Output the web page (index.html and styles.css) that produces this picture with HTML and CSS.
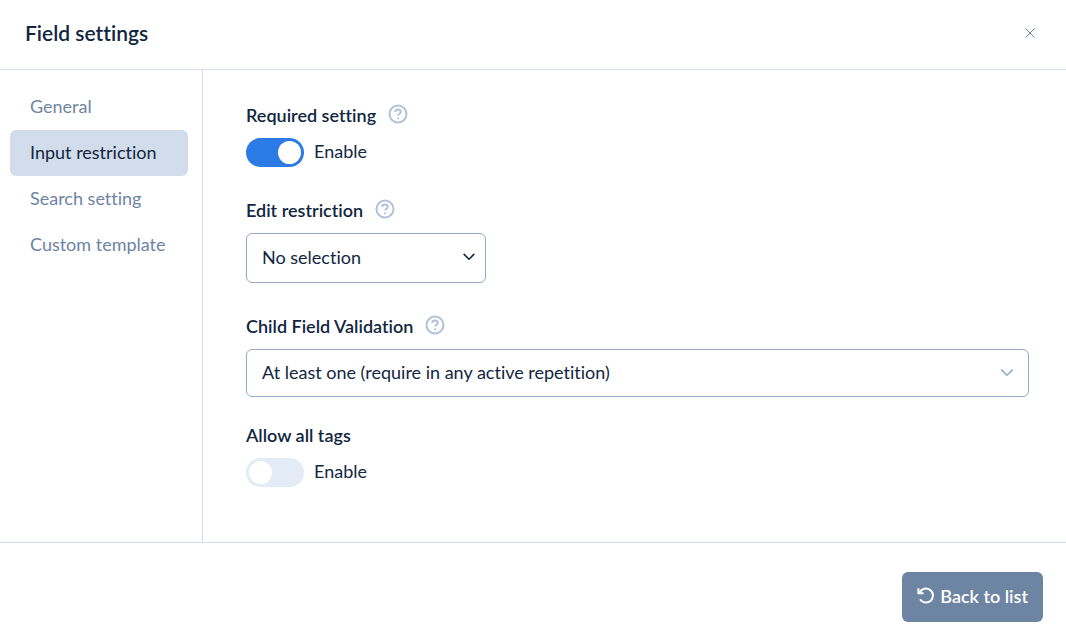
FILE: index.html
```html
<!DOCTYPE html>
<html lang="en">
<head>
  <meta charset="UTF-8" />
  <meta name="viewport" content="width=device-width, initial-scale=1" />
  <title>Field settings</title>
  <link rel="stylesheet" href="styles.css">
</head>
<body>

  <svg class="sprite" aria-hidden="true">
    <symbol id="icon-help" viewBox="0 0 20 20">
      <circle cx="10" cy="10" r="8.5" />
      <path d="M7.2 8.1a2.8 2.5 0 0 1 5.6 0c0 1.7-2.7 1.8-2.7 3.5M10.1 13.5v1.8" />
    </symbol>
  </svg>

  <header class="modal-header">
    <h1 class="modal-title">Field settings</h1>
    <button type="button" class="btn-close" aria-label="Close">
      <svg viewBox="0 0 10 10"><path d="M.5 .5l9 9M9.5 .5l-9 9" /></svg>
    </button>
  </header>

  <div class="modal-body">
    <nav class="side-nav">
      <a href="#general">General</a>
      <a href="#input" class="active">Input restriction</a>
      <a href="#search">Search setting</a>
      <a href="#template">Custom template</a>
    </nav>

    <form class="settings" id="input">
      <div class="field">
        <div class="field-label with-help">
          <span>Required setting</span>
          <svg class="help"><use href="#icon-help" /></svg>
        </div>
        <label class="switch">
          <input type="checkbox" checked />
          <span>Enable</span>
        </label>
      </div>

      <div class="field">
        <div class="field-label with-help">
          <label for="editRestriction">Edit restriction</label>
          <svg class="help"><use href="#icon-help" /></svg>
        </div>
        <div class="select-wrap short">
          <select id="editRestriction">
            <option>No selection</option>
          </select>
          <svg class="chevron" viewBox="0 0 12 12"><path d="M1.2 3.4L6 8.2l4.8-4.8" /></svg>
        </div>
      </div>

      <div class="field">
        <div class="field-label with-help">
          <label for="childValidation">Child Field Validation</label>
          <svg class="help"><use href="#icon-help" /></svg>
        </div>
        <div class="select-wrap">
          <select id="childValidation">
            <option>At least one (require in any active repetition)</option>
          </select>
          <svg class="chevron light" viewBox="0 0 12 12"><path d="M.8 4.1L6 9.3l5.2-5.2" /></svg>
        </div>
      </div>

      <div class="field">
        <div class="field-label">
          <span>Allow all tags</span>
        </div>
        <label class="switch">
          <input type="checkbox" />
          <span>Enable</span>
        </label>
      </div>
    </form>
  </div>

  <footer class="modal-footer">
    <button type="button" class="btn-back">
      <svg viewBox="0 0 18 18"><path d="M2.6 5.6A7 7 0 1 1 3 12.2M1.4 1.2v5h5.2" /></svg>
      <span>Back to list</span>
    </button>
  </footer>

</body>
</html>
```
FILE: styles.css
```css
*{box-sizing:border-box}
body{
  margin:0;
  min-height:100vh;
  display:flex;
  flex-direction:column;
  background:#fff;
  color:#12263f;
  font-family:Lato,"Liberation Sans",sans-serif;
  font-size:18px;
  line-height:24px;
  font-variant-ligatures:none
}
button,select{
  font:inherit;
  font-variant-ligatures:none;
  color:inherit
}
svg{
  flex:none;
  fill:none;
  stroke:currentColor
}
.sprite{display:none}

.modal-header{
  display:flex;
  align-items:center;
  justify-content:space-between;
  height:70px;
  padding:0 25px 4px;
  border-bottom:1px solid #d2ddec
}
.modal-title{
  margin:0;
  font-size:21px;
  font-weight:600
}
.btn-close{
  display:flex;
  padding:7px 6px 6px;
  border:0;
  background:none;
  color:#6e84a3;
  cursor:pointer
}
.btn-close svg{
  width:10px;
  height:10px
}

.modal-body{
  flex:1;
  display:flex
}
.side-nav{
  width:203px;
  padding:14px 14px 14px 10px;
  border-right:1px solid #d2ddec
}
.side-nav a{
  display:block;
  padding:10px 20px 12px;
  border-radius:6px;
  color:#6e84a3;
  text-decoration:none
}
.side-nav a.active{
  background:#d2ddec;
  color:#12263f
}

.settings{
  flex:1;
  display:flex;
  flex-direction:column;
  gap:26px;
  padding:28px 37px 28px 43px
}
.field-label{
  display:flex;
  align-items:flex-end;
  gap:12px;
  margin-bottom:11px;
  font-weight:600
}
.field-label.with-help{height:29px}
.help{
  width:20px;
  height:20px;
  margin-bottom:3px;
  color:#b1c2d9;
  stroke-width:2
}
.switch{
  display:flex;
  align-items:center;
  gap:10px
}
.switch span{padding-bottom:3px}
.switch input{
  appearance:none;
  width:58px;
  height:29px;
  margin:0;
  padding:3px;
  border-radius:15px;
  background:#e3ebf6
}
.switch input::before{
  content:"";
  display:block;
  width:23px;
  height:23px;
  border-radius:50%;
  background:#fff
}
.switch input:checked{background:#2c7be5}
.switch input:checked::before{margin-left:auto}

.select-wrap{position:relative}
.select-wrap.short{width:240px}
.select-wrap select{
  display:block;
  appearance:none;
  width:100%;
  height:48px;
  padding:0 40px 2px 15px;
  border:1px solid #95aac9;
  border-radius:6px;
  background:#fff
}
.select-wrap.short select{height:50px}
.chevron{
  position:absolute;
  top:0;
  bottom:2px;
  right:11px;
  width:12px;
  height:12px;
  margin:auto;
  stroke-width:1.6;
  stroke-linecap:round;
  stroke-linejoin:round;
  pointer-events:none
}
.chevron.light{
  right:16px;
  color:#95aac9
}

.modal-footer{
  display:flex;
  justify-content:flex-end;
  padding:29px 23px 22px;
  border-top:1px solid #d2ddec
}
.btn-back{
  display:flex;
  align-items:center;
  gap:5px;
  height:50px;
  padding:0 15px 2px;
  border:0;
  border-radius:6px;
  background:#6e84a3;
  color:#fff;
  font-weight:600;
  cursor:pointer
}
.btn-back svg{
  width:18px;
  height:18px;
  stroke-width:2
}
```
